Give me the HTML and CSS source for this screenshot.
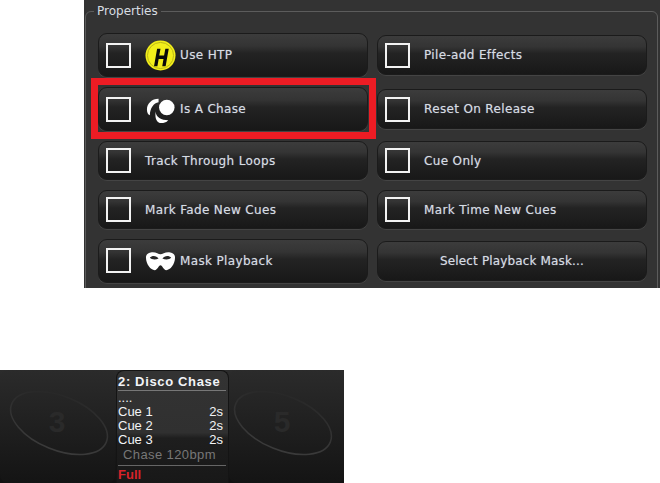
FILE: index.html
```html
<!DOCTYPE html>
<html lang="en">
<head>
    <meta charset="UTF-8">
    <title>Playback Properties</title>
    <link rel="stylesheet" href="styles.css">
</head>
<body>
    <!-- Properties panel -->
    <div class="panel">
        <fieldset class="props">
            <legend>Properties</legend>

            <div class="prop-grid">
                <div class="prop tall">
                    <span class="check"></span>
                    <svg class="icon" viewBox="0 0 32 32">
                        <circle cx="16" cy="16" r="15.5" fill="#f2ee1a"/>
                        <circle cx="16" cy="16" r="13.5" fill="none" stroke="#b9b516" stroke-width="1"/>
                        <path d="M12.500 9h3.500l-1.300 7h5l1.300-7h3.500l-3.200 18h-3.500l1.300-7.500h-5l-1.300 7.500h-3.500z" fill="#0a0a0a"/>
                    </svg>
                    <span class="label">Use HTP</span>
                </div>
                <div class="prop">
                    <span class="check"></span>
                    <span class="label wide">Pile-add Effects</span>
                </div>

                <div class="prop tall">
                    <span class="check"></span>
                    <svg class="icon" viewBox="0 0 32 32">
                        <path d="M14 5C7 5 2 10 2 16c0 3 1 5 3 6 0-7 4-13 9-13.500z" fill="#fff"/>
                        <path d="M11 18c0 6 6 9 13 9-2 2.500-5 3-7 3-5 0-7-5-6-12z" fill="#fff"/>
                        <circle cx="22.500" cy="14" r="8" fill="#fff"/>
                    </svg>
                    <span class="label">Is A Chase</span>
                    <span class="highlight"></span>
                </div>
                <div class="prop">
                    <span class="check"></span>
                    <span class="label wide">Reset On Release</span>
                </div>

                <div class="prop">
                    <span class="check"></span>
                    <span class="label wide">Track Through Loops</span>
                </div>
                <div class="prop">
                    <span class="check"></span>
                    <span class="label wide">Cue Only</span>
                </div>

                <div class="prop">
                    <span class="check"></span>
                    <span class="label wide">Mark Fade New Cues</span>
                </div>
                <div class="prop">
                    <span class="check"></span>
                    <span class="label wide">Mark Time New Cues</span>
                </div>

                <div class="prop tall">
                    <span class="check"></span>
                    <svg class="icon" viewBox="0 0 32 32">
                        <path fill-rule="evenodd" fill="#fff" d="M7 7.500C11 7 14 9.500 16 9.500S21 7 25 7.500C29 8 31 10 31 13c0 7-5 13-9 13-3 0-4-5-6-5s-3 5-6 5C6 26 1 20 1 13c0-3 2-5 6-5.500zM5 13c2 2.500 6 2.500 9 1-2-3.500-7-3.500-9-1zM27 13c-2 2.500-6 2.500-9 1 2-3.500 7-3.500 9-1z"/>
                    </svg>
                    <span class="label">Mask Playback</span>
                </div>
                <div class="prop action">Select Playback Mask...</div>
            </div>
        </fieldset>
    </div>

    <!-- Playback tiles -->
    <div class="strip">
        <div class="tile">
            <svg class="ghost" viewBox="0 0 115 113">
                <defs>
                    <linearGradient id="ring" x1="0" y1="0" x2="0.3" y2="1">
                        <stop offset="0" stop-color="#262626"/>
                        <stop offset="1" stop-color="#3a3a3a"/>
                    </linearGradient>
                </defs>
                <ellipse cx="59" cy="53" rx="51" ry="27" transform="rotate(22 59 53)" fill="none" stroke="url(#ring)" stroke-width="1.500"/>
                <text x="57" y="62" text-anchor="middle">3</text>
            </svg>
        </div>

        <div class="card">
            <div class="card-title">2: Disco Chase</div>
            <div class="cue-list">
                <div class="dots">....</div>
                <div class="cue"><span>Cue 1</span><span>2s</span></div>
                <div class="cue"><span>Cue 2</span><span>2s</span></div>
                <div class="cue"><span>Cue 3</span><span>2s</span></div>
                <div class="rate">Chase 120bpm</div>
            </div>
            <div class="level">Full</div>
        </div>

        <div class="tile">
            <svg class="ghost" viewBox="0 0 115 113">
                <ellipse cx="54" cy="53" rx="51" ry="27" transform="rotate(22 54 53)" fill="none" stroke="url(#ring)" stroke-width="1.500"/>
                <text x="53" y="62" text-anchor="middle">5</text>
            </svg>
        </div>
    </div>
</body>
</html>
```

FILE: styles.css
```css
/* Basic Reset */
* {
    margin: 0;
    padding: 0;
    box-sizing: border-box;
}

body {
    font-family: 'Liberation Sans', Arial, sans-serif;
    background-color: #fff;
    color: #dde3ea;
}

.panel {
    width: 576px;
    height: 288px;
    margin-left: 84px;
    padding: 4px 2px 0 1px;
    background-color: #333;
    overflow: hidden;
}

.props {
    height: 300px;
    border: 1px solid #5c5c5c;
    border-radius: 6px;
    padding: 15px 8px 0 12px;
}

.props legend {
    margin-left: -4px;
    padding: 0 3px;
    font-family: 'DejaVu Sans', sans-serif;
    font-size: 12px;
    color: #d8dde2;
}

.prop-grid {
    display: grid;
    grid-template-columns: 270px 270px;
    grid-template-rows: 44px 44px 39px 39px 43px;
    column-gap: 9px;
    row-gap: 10px;
    align-items: center;
}

.prop {
    position: relative;
    height: 40px;
    display: flex;
    align-items: center;
    padding-left: 7px;
    border-radius: 9px;
    background: linear-gradient(#3c3c3c 0, #343434 28%, #232323 46%, #181818 100%);
    border: 1px solid #1b1b1b;
    box-shadow: 0 1px 0 #444;
    font-family: 'DejaVu Sans', sans-serif;
    font-size: 12px;
    letter-spacing: 0.35px;
    color: #d6dce4;
    text-shadow: 0 0 1px rgba(214, 220, 228, 0.5);
}

.prop.tall {
    height: 44px;
}

.prop:nth-child(n+5):nth-child(-n+8) {
    height: 39px;
}

.check {
    width: 25px;
    height: 25px;
    border: 2px solid #f2f2f2;
    flex-shrink: 0;
}

.icon {
    width: 31px;
    height: 31px;
    margin-left: 14px;
    flex-shrink: 0;
}

.label {
    margin-left: 4px;
}

.label.wide {
    margin-left: 14px;
}

.action {
    justify-content: center;
    padding-left: 0;
    letter-spacing: 0.15px;
}

/* red callout over the chase button */
.highlight {
    position: absolute;
    top: -10px;
    left: -8px;
    right: -9px;
    bottom: -9px;
    border: 7px solid #ed1c24;
}

.strip {
    display: flex;
    width: 344px;
    height: 113px;
    margin-top: 82px;
    background: linear-gradient(#2c2c2c, #111);
}

.tile {
    width: 115px;
    border-radius: 8px;
    background: linear-gradient(#2b2b2b, #141414);
}

.ghost {
    display: block;
    width: 115px;
    height: 113px;
}

.ghost text {
    font-family: 'Liberation Sans', Arial, sans-serif;
    font-size: 30px;
    font-weight: bold;
    fill: #2a2a2a;
}

.card {
    width: 114px;
    margin-left: 1px;
    padding: 3px 2px 0 1px;
    border: 1px solid #141414;
    border-bottom: 0;
    border-radius: 8px 8px 0 0;
    background: linear-gradient(#333 0, #303030 55%, #1e1e1e 60%, #181818 100%);
    font-size: 13px;
    color: #f2f4f7;
}

.card-title {
    height: 17px;
    line-height: 16px;
    font-weight: bold;
    letter-spacing: 0.65px;
    border-bottom: 1px solid #777;
}

.cue-list {
    height: 75px;
    border-bottom: 1px solid #666;
}

.dots {
    height: 14px;
    line-height: 14px;
}

.cue {
    display: flex;
    justify-content: space-between;
    height: 14px;
    line-height: 14px;
    padding-right: 3px;
}

.rate {
    padding-left: 5px;
    line-height: 15px;
    letter-spacing: 0.4px;
    color: #777;
}

.level {
    margin-top: 1px;
    line-height: 16px;
    font-weight: bold;
    color: #d8232a;
}
```
